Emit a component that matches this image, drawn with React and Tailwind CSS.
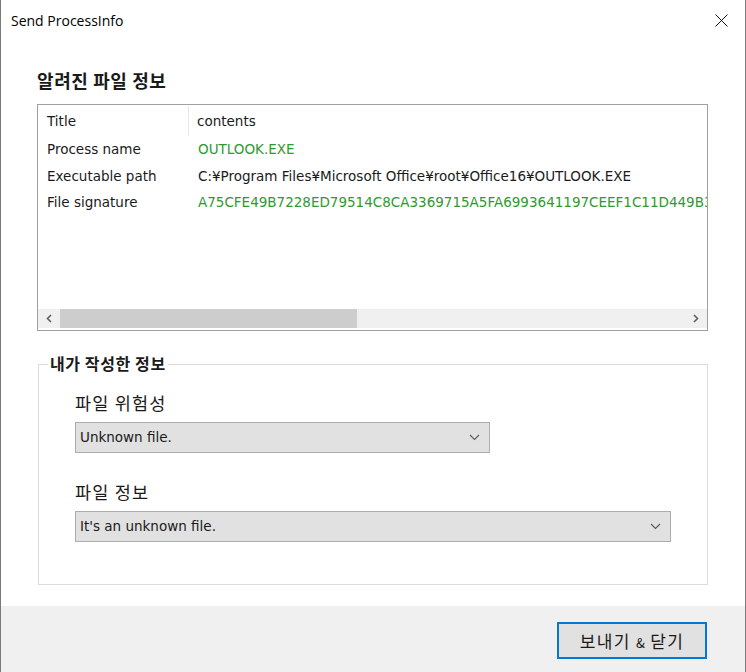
const ROWS = [
  { label: 'Process name', value: 'OUTLOOK.EXE', green: true },
  { label: 'Executable path', value: 'C:¥Program Files¥Microsoft Office¥root¥Office16¥OUTLOOK.EXE', green: false },
  { label: 'File signature', value: 'A75CFE49B7228ED79514C8CA3369715A5FA6993641197CEEF1C11D449B3A0E57', green: true },
]

const ko = { fontFamily: '"Noto Sans CJK KR", "Noto Sans", sans-serif' }
const tahoma = { fontFamily: '"DejaVu Sans", "Liberation Sans", sans-serif' }

function Chevron() {
  return (
    <svg width="11" height="7" viewBox="0 0 11 7" fill="none" stroke="#5a5a5a" strokeWidth="1.1">
      <path d="M1 1l4.5 4.5L10 1" />
    </svg>
  )
}

function Select({ width, text }) {
  return (
    <div
      className="flex items-center justify-between h-[31px] border border-[#adadad] bg-[#e1e1e1] pl-[4px] pr-[9px]"
      style={{ width }}
    >
      <span className="text-[13.5px] text-[#1a1a1a]" style={tahoma}>{text}</span>
      <Chevron />
    </div>
  )
}

export default function App() {
  return (
    <div className="w-[746px] h-[672px] flex flex-col bg-white border-l border-r border-[#7a7a7a] overflow-hidden">
      {/* Title bar */}
      <div className="h-[40px] flex items-center justify-between pl-[10px] pr-[17px]">
        <span className="text-[14px] text-black" style={{ fontFamily: '"Open Sans", sans-serif' }}>Send ProcessInfo</span>
        <svg width="13" height="13" viewBox="0 0 13 13" stroke="#111" strokeWidth="1">
          <path d="M0.5 0.5l12 12M12.5 0.5l-12 12" />
        </svg>
      </div>

      <div className="flex-1 flex flex-col pl-[36px] pr-[37px]">
        <h2 className="mt-[28px] text-[18px] tracking-[0.6px] font-bold text-[#1a1a1a] leading-[24px]" style={ko}>알려진 파일 정보</h2>

        {/* List view */}
        <div className="mt-[12px] h-[227px] border border-[#a0a0a0] flex flex-col" style={tahoma}>
          <div className="flex-1 overflow-hidden pt-[1px]">
            <div className="flex h-[30px] items-center text-[13.5px] text-[#1a1a1a]">
              <div className="w-[151px] pl-[9px] h-full flex items-center border-r border-[#e5e5e5]">Title</div>
              <div className="pl-[8px]">contents</div>
            </div>
            {ROWS.map(r => (
              <div key={r.label} className="flex h-[26.5px] items-center text-[13.5px] whitespace-nowrap">
                <div className="w-[151px] pl-[9px] shrink-0 text-[#1a1a1a]">{r.label}</div>
                <div className={`pl-[9px] ${r.green ? 'text-[#2e9a2e]' : 'text-[#1a1a1a]'}`}>{r.value}</div>
              </div>
            ))}
          </div>
          {/* Horizontal scrollbar */}
          <div className="h-[19px] mb-[2px] bg-[#f0f0f0] flex items-center">
            <div className="w-[22px] flex justify-center">
              <svg width="6" height="9" viewBox="0 0 6 9" fill="none" stroke="#606060" strokeWidth="1.6"><path d="M5 1L1.5 4.5 5 8" /></svg>
            </div>
            <div className="w-[297px] h-full bg-[#cdcdcd]" />
            <div className="flex-1" />
            <div className="w-[22px] flex justify-center">
              <svg width="6" height="9" viewBox="0 0 6 9" fill="none" stroke="#606060" strokeWidth="1.6"><path d="M1 1l3.5 3.5L1 8" /></svg>
            </div>
          </div>
        </div>

        {/* Group box */}
        <div className="relative mt-[33px] h-[221px] border border-[#dcdcdc] ml-[1px] pl-[36px]">
          <span className="absolute -top-[14px] left-[9px] bg-white px-[2px] text-[16px] tracking-[0.6px] font-bold text-[#1a1a1a] leading-[24px]" style={ko}>내가 작성한 정보</span>
          <div className="mt-[26px] text-[17.5px] tracking-[1.2px] text-[#1a1a1a] leading-[24px]" style={ko}>파일 위험성</div>
          <div className="mt-[7px]"><Select width="415px" text="Unknown file." /></div>
          <div className="mt-[27px] text-[17.5px] tracking-[1.2px] text-[#1a1a1a] leading-[24px]" style={ko}>파일 정보</div>
          <div className="mt-[7px]"><Select width="596px" text="It's an unknown file." /></div>
        </div>
      </div>

      {/* Footer */}
      <div className="h-[66px] bg-[#f0f0f0] flex items-start justify-end pr-[38px] pt-[16px]">
        <button className="w-[150px] h-[37px] border-2 border-[#0078d7] bg-[#e1e1e1] text-[17px] tracking-[1.4px] text-[#1a1a1a]" style={ko}>
          보내기 <span className="text-[13px] tracking-normal">&amp;</span> 닫기
        </button>
      </div>
    </div>
  )
}
